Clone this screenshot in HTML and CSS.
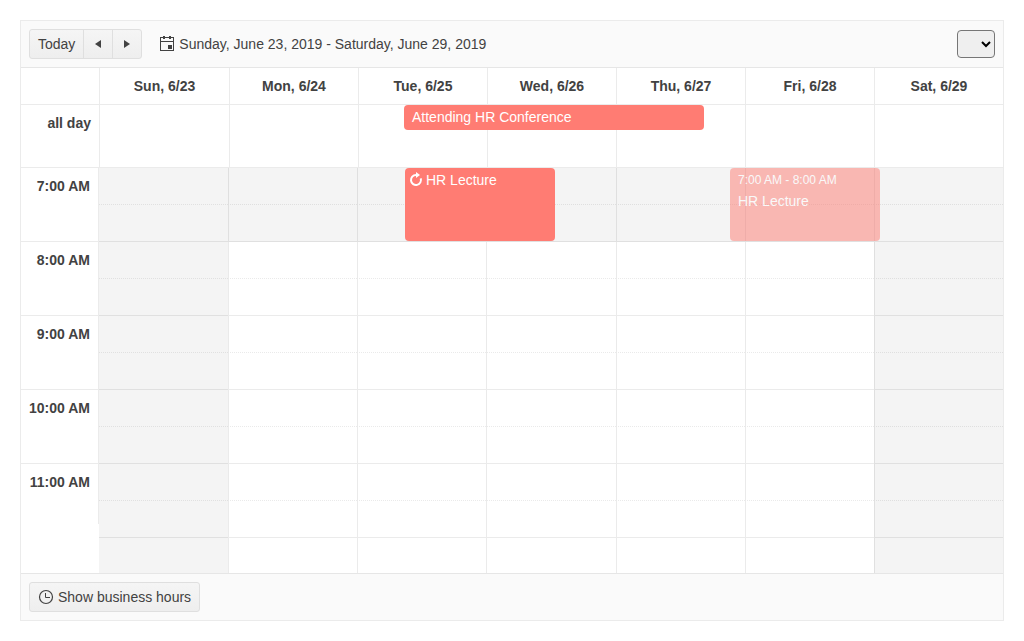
FILE: index.html
```html
<!DOCTYPE html>
<html lang="en">
<head>
<meta charset="utf-8">
<meta name="viewport" content="width=device-width, initial-scale=1">
<title>Scheduler</title>
<link rel="stylesheet" href="styles.css">
</head>
<body>
<main class="scheduler">
  <header class="toolbar">
    <div class="button-group">
      <button type="button" class="button">Today</button>
      <button type="button" class="button button-icon" aria-label="Previous"><svg class="icon" viewBox="0 0 16 16"><path d="M11 4v8L5 8z"/></svg></button>
      <button type="button" class="button button-icon" aria-label="Next"><svg class="icon" viewBox="0 0 16 16"><path d="M5 4v8l6-4z"/></svg></button>
    </div>
    <a href="#" class="current-date"><svg class="icon" viewBox="0 0 16 16"><path d="M1 1h14v14H1zM2 2v3h12V2zM2 6v8h12V6z" fill-rule="evenodd"/><path d="M4 0h2v3H4zM10 0h2v3h-2zM9 9h4v4H9z"/></svg><span>Sunday, June 23, 2019 - Saturday, June 29, 2019</span></a>
    <select class="views" aria-label="View"></select>
  </header>

  <div class="head">
    <table class="head-table">
      <colgroup><col class="col-time"><col class="col-first"><col span="6"></colgroup>
      <thead>
        <tr><td></td><th scope="col">Sun, 6/23</th><th scope="col">Mon, 6/24</th><th scope="col">Tue, 6/25</th><th scope="col">Wed, 6/26</th><th scope="col">Thu, 6/27</th><th scope="col">Fri, 6/28</th><th scope="col">Sat, 6/29</th></tr>
      </thead>
      <tbody>
        <tr class="all-day"><th scope="row">all day</th><td></td><td></td><td></td><td></td><td></td><td></td><td></td></tr>
      </tbody>
    </table>
    <div class="event event-conference">Attending HR Conference</div>
  </div>

  <div class="content">
    <table class="times">
      <tbody>
        <tr><th scope="row">7:00 AM</th></tr>
        <tr><th scope="row">8:00 AM</th></tr>
        <tr><th scope="row">9:00 AM</th></tr>
        <tr><th scope="row">10:00 AM</th></tr>
        <tr><th scope="row">11:00 AM</th></tr>
      </tbody>
    </table>
    <div class="slots">
      <table class="slot-table">
        <colgroup><col span="3" class="col-day"><col class="col-middle"><col span="3"></colgroup>
        <tbody>
          <tr class="closed"><td></td><td></td><td></td><td></td><td></td><td></td><td></td></tr>
          <tr class="closed"><td></td><td></td><td></td><td></td><td></td><td></td><td></td></tr>
          <tr><td></td><td></td><td></td><td></td><td></td><td></td><td></td></tr>
          <tr><td></td><td></td><td></td><td></td><td></td><td></td><td></td></tr>
          <tr><td></td><td></td><td></td><td></td><td></td><td></td><td></td></tr>
          <tr><td></td><td></td><td></td><td></td><td></td><td></td><td></td></tr>
          <tr><td></td><td></td><td></td><td></td><td></td><td></td><td></td></tr>
          <tr><td></td><td></td><td></td><td></td><td></td><td></td><td></td></tr>
          <tr><td></td><td></td><td></td><td></td><td></td><td></td><td></td></tr>
          <tr><td></td><td></td><td></td><td></td><td></td><td></td><td></td></tr>
          <tr class="partial"><td></td><td></td><td></td><td></td><td></td><td></td><td></td></tr>
        </tbody>
      </table>
      <div class="event event-lecture"><svg class="icon" viewBox="0 0 16 16"><path d="M8 3a5 5 0 1 0 4.700 3.300" fill="none" stroke="currentColor" stroke-width="2"/><path d="M8 0l4 3-4 3z"/></svg><span>HR Lecture</span></div>
      <div class="event event-hint"><div class="event-time">7:00 AM - 8:00 AM</div><div>HR Lecture</div></div>
    </div>
  </div>

  <footer class="footer">
    <button type="button" class="button button-hours"><svg class="icon" viewBox="0 0 16 16"><g fill="none" stroke="currentColor"><circle cx="8" cy="8" r="6.500" stroke-width="1.200"/><path d="M7.500 4v4.500H12"/></g></svg><span>Show business hours</span></button>
  </footer>
</main>
</body>
</html>
```

FILE: styles.css
```css
* { box-sizing: border-box; }

body {
  margin: 0;
  padding: 20px;
  background: #fff;
  color: #424242;
  font: 14px/20px "Liberation Sans", Arial, sans-serif;
}

.scheduler {
  --line: rgba(0, 0, 0, 0.08);
  border: 1px solid var(--line);
  background: #fff;
}

.icon {
  flex: none;
  width: 16px;
  height: 16px;
  fill: currentColor;
}

.toolbar,
.footer {
  display: flex;
  align-items: center;
  padding: 8px;
  background: #fafafa;
}
.toolbar { border-bottom: 1px solid var(--line); }
.footer { border-top: 1px solid var(--line); }

.button-group { display: flex; }

.button {
  display: flex;
  align-items: center;
  justify-content: center;
  gap: 4px;
  height: 30px;
  padding: 0 8px;
  border: 1px solid #dfdfdf;
  border-radius: 3px;
  background: linear-gradient(#f5f5f5, #eee);
  color: inherit;
  font: inherit;
}
.button-group .button { border-radius: 0; }
.button-group .button:first-child { border-radius: 3px 0 0 3px; }
.button-group .button:last-child { border-radius: 0 3px 3px 0; }
.button-group .button + .button { margin-left: -1px; }
.button-icon { width: 30px; padding: 0; }

.current-date {
  display: flex;
  align-items: center;
  gap: 4px;
  margin-left: 17px;
  color: inherit;
  text-decoration: none;
}

.views {
  width: 38px;
  height: 28px;
  margin-left: auto;
  border: 1px solid #767676;
  border-radius: 4px;
  background: #efefef;
  font: inherit;
}

table {
  border-collapse: separate;
  border-spacing: 0;
  table-layout: fixed;
}
th, td { padding: 0; }

.head { position: relative; }
.head-table { width: 100%; }
.col-time { width: 78px; }
.col-first { width: 130px; }
.head-table th,
.head-table td {
  padding: 8px;
  border-bottom: 1px solid var(--line);
}
.head-table tr > * + * { border-left: 1px solid var(--line); }
.all-day { height: 63px; }
.all-day th {
  text-align: right;
  vertical-align: top;
}

.content {
  display: flex;
  align-items: flex-start;
}

.times {
  flex: none;
  width: 78px;
}
.times th {
  height: 74px;
  padding: 8px 8px 8px 0;
  border-right: 1px solid var(--line);
  border-bottom: 1px solid var(--line);
  text-align: right;
  vertical-align: top;
  white-space: nowrap;
}
.times tr:last-child th {
  height: 60px;
  border-bottom: 0;
}

.slots {
  position: relative;
  flex: 1;
}
.slot-table { width: 100%; }
.col-day { width: 129px; }
.col-middle { width: 130px; }
.slot-table td {
  height: 37px;
  border-bottom: 1px solid var(--line);
}
.slot-table tr:nth-child(odd) td { border-bottom-style: dotted; }
.slot-table td + td { border-left: 1px solid var(--line); }
.slot-table .closed td,
.slot-table td:first-child,
.slot-table td:last-child { background: #f4f4f4; }
.slot-table .partial td {
  height: 35px;
  border-bottom: 0;
}

.event {
  position: absolute;
  top: 0;
  border-radius: 4px;
  background: #ff7c73;
  color: #fff;
}
.event-conference {
  top: 37px;
  left: 383px;
  width: 300px;
  height: 25px;
  padding: 2px 8px;
}
.event-lecture {
  display: flex;
  gap: 2px;
  left: 306px;
  width: 150px;
  height: 73px;
  padding: 2px 3px;
}
.event-lecture .icon { margin-top: 2px; }
.event-hint {
  left: 631px;
  width: 150px;
  height: 73px;
  padding: 2px 8px;
  opacity: 0.5;
}
.event-time {
  margin-bottom: 1px;
  font-size: 12px;
}
```
